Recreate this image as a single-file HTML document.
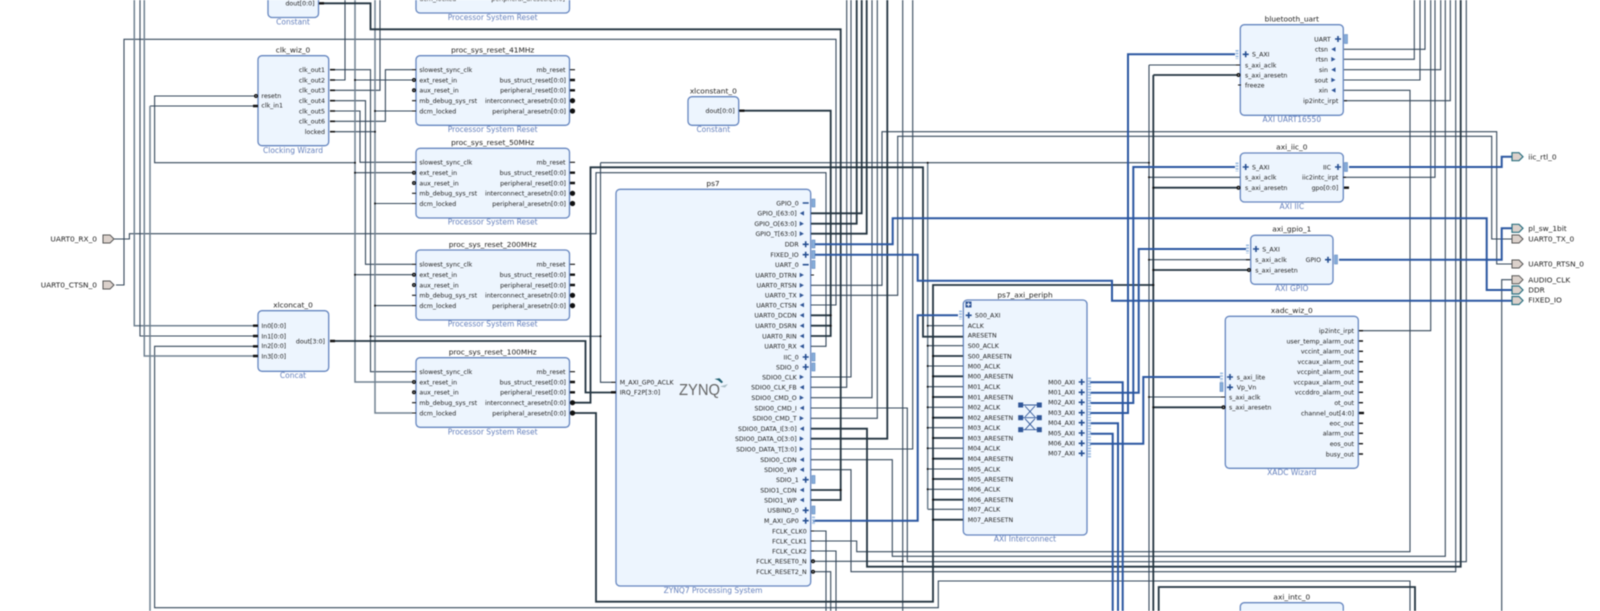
<!DOCTYPE html>
<html><head><meta charset="utf-8"><title>Block Design</title>
<style>
html,body{margin:0;padding:0;background:#fff;width:1600px;height:611px;overflow:hidden}
svg{display:block;filter:blur(.4px)}
text{font-family:"DejaVu Sans",sans-serif;font-size:6.25px;fill:#222}
.t{font-size:7.4px;text-anchor:middle;fill:#1c1c1c}
.b{font-size:7.5px;text-anchor:middle;fill:#6480bd}
.e{text-anchor:end}
.x{font-size:7.4px;fill:#222}
.box{fill:#edf5fe;stroke:#6485bf;stroke-width:1.3}
.w,.g,.k,.h,.u,.p,.s,.m{fill:none}
.w{stroke:#34475a;stroke-width:1.1}
.g{stroke:#6f8090;stroke-width:1.5}
.k{stroke:#22333f;stroke-width:1.8}
.u{stroke:#2a56a0;stroke-width:2}
.p{stroke:#264f92;stroke-width:1.6}
.s{stroke:#111;stroke-width:1.1}
.m{stroke:#111;stroke-width:2.4}
</style></head><body>
<svg xmlns="http://www.w3.org/2000/svg" width="1600" height="611" viewBox="0 0 1600 611">
<rect width="1600" height="611" fill="#fff"/>

<!-- blocks -->
<rect class="box" x="268" y="-10" width="50.5" height="27.5" rx="4"/>
<rect class="box" x="416" y="-30" width="153.5" height="43" rx="4"/>
<rect class="box" x="258" y="55.7" width="70.7" height="90" rx="4"/>
<rect class="box" x="416" y="55.7" width="153.5" height="69.6" rx="4"/>
<rect class="box" x="416" y="148.3" width="153.5" height="69.7" rx="4"/>
<rect class="box" x="416" y="250" width="153.5" height="70" rx="4"/>
<rect class="box" x="416" y="357.7" width="153.5" height="69.6" rx="4"/>
<rect class="box" x="258" y="310.7" width="70.7" height="60.6" rx="4"/>
<rect class="box" x="688" y="96.7" width="50.7" height="28.6" rx="4"/>
<rect class="box" x="616" y="189.3" width="194.7" height="396.7" rx="4"/>
<rect class="box" x="963.3" y="300" width="123.7" height="235" rx="4"/>
<rect class="box" x="1240.3" y="24.7" width="103" height="90.6" rx="4"/>
<rect class="box" x="1240.3" y="153" width="103" height="49" rx="4"/>
<rect class="box" x="1250.7" y="235.3" width="82.3" height="49" rx="4"/>
<rect class="box" x="1225.3" y="316.3" width="133" height="152" rx="4"/>
<rect class="box" x="1240.3" y="602.7" width="103" height="30" rx="4"/>

<!-- wires: thin -->
<path class="w" d="M116 285H124V39.3H836V305H811"/>
<path class="w" d="M114 239H129.4V233.7H596V172.7H826V346.3H811"/>
<path class="w" d="M258 96H154.6V162.7H355"/>
<path class="w" d="M258 106H150"/>
<path class="w" d="M332 80H345V0"/>
<path class="w" d="M332 90.3H380V0"/>
<path class="w" d="M332 100.7H365.5V264.3H412"/>
<path class="w" d="M332 111H360V162.3H412"/>
<path class="w" d="M332 121.3H385.4V69.7H412"/>
<path class="w" d="M332 131.7H375M375 111H412M375 203.5H412M375 305.6H412"/>
<path class="w" d="M332 69.7H370.5V371.7H412M370.5 336.3H600.5M600.5 162.7V382.3H612M600.5 162.7H1149"/>
<path class="w" d="M355 80H412M355 172.7H412M355 274.7H412"/>
<path class="w" d="M258 346.3H154.6V607.7H938.3V581H1410V611"/>
<path class="w" d="M811 285.3H882V131.7H1496.7V264H1512"/>
<path class="w" d="M811 295.3H897.7V136.3H1491.7V239H1512"/>
<path class="w" d="M811 377H851V0"/>
<path class="w" d="M811 387.3H846.7V0"/>
<path class="w" d="M811 397.7H872V0"/>
<path class="w" d="M811 408H907.3V561.7H1466.3V0"/>
<path class="w" d="M811 418.3H877.3V0"/>
<path class="w" d="M811 449H912.7V0"/>
<path class="w" d="M811 459.7H892.3V556.3H1445.3V0"/>
<path class="w" d="M811 469.7H851V571.7H1455.7V0"/>
<path class="w" d="M811 561.3H902.7M902.7 0V611"/>
<path class="w" d="M811 571.7H830.7V611"/>
<path class="w" d="M811 531H826V611"/>
<path class="w" d="M811 541H856.7V551.7H1410V90.3H1344"/>
<path class="w" d="M811 551H836V611"/>
<path class="w" d="M1344 49.3H1425V0M1344 59.3H1414.3V0M1344 69.7H1440.7V0M1344 80H1420V0M1344 100.7H1450.3V0"/>
<path class="w" d="M1344 177.3H1435V0M1359 330.7H1430.7V0"/>
<path class="w" d="M1512 279.7H1501.7V611"/>
<path class="w" d="M1149 65V611M1149 65H1240M1149 177.3H1240M1149 259.7H1250M1149 397H1225"/>
<path class="w" d="M927.7 325.7H963M927.7 345.7H963M927.7 366H963M927.7 386.7H963M927.7 407.3H963M927.7 427.7H963M927.7 448.3H963M927.7 469H963M927.7 489.3H963M927.7 509.3H963"/>

<!-- wires: gray medium -->
<path class="g" d="M134.3 0V325.7H258"/>
<path class="w" d="M140 0V336H258"/>
<path class="g" d="M144.3 0V356H258"/>
<path class="g" d="M150 106V611"/>
<path class="g" d="M355 0V382H412"/>
<path class="g" d="M375 0V413H412"/>
<path class="g" d="M927.7 162.7V509.3"/>

<!-- wires: thick dark -->
<path class="k" d="M322 3.3H370.5V29.3H840.7V500H811M811 490H840.7"/>
<path class="k" d="M332 341H585.5V392.5H612"/>
<path class="k" d="M570 402.7H590.5V167.3H923V336.7H963"/>
<path class="k" d="M570 413H596V601.7H933V285H1153.3"/>
<path class="k" d="M739 110.7H830.7V336H811M811 315.3H830.7M811 325.7H830.7"/>
<path class="k" d="M811 213.3H861.7V0M811 223.7H856.7V0M811 233.7H866.7V0"/>
<path class="k" d="M811 428.7H867V566.7H1460.7V0"/>
<path class="k" d="M811 438.7H887.3V0"/>
<path class="k" d="M1153.3 75V611M1153.3 75H1238M1153.3 187.7H1238M1153.3 270H1248M1153.3 407.3H1223"/>
<path class="k" d="M933 356H963M933 376.3H963M933 397H963M933 417.7H963M933 438H963M933 458.7H963M933 479H963M933 499.7H963M933 519.7H963"/>
<path class="k" d="M1158.7 611V587H1415V611"/>

<!-- wires: blue interface -->
<path class="u" d="M813 244.3H892.7V218.3H1486.7V290H1512"/>
<path class="u" d="M813 254.7H917.7V280.7H1112V300.7H1512"/>
<path class="u" d="M813 520.7H917.7V315.3H958"/>
<path class="u" d="M1090 382.3H1122.7V611"/>
<path class="u" d="M1090 392.7H1138.7V249H1246"/>
<path class="u" d="M1090 403H1133.3V167H1235"/>
<path class="u" d="M1090 413H1128V54.3H1235"/>
<path class="u" d="M1090 423.3H1118V611"/>
<path class="u" d="M1090 433.7H1112.7V611"/>
<path class="u" d="M1090 443.7H1143.3V377H1220"/>
<path class="u" d="M1349 167H1501.7V156.7H1512"/>
<path class="u" d="M1339 259.7H1501.7V228.3H1512"/>

<!-- junction dots -->
<g fill="#111">
<circle cx="355" cy="80" r="1"/><circle cx="355" cy="162.7" r="1"/><circle cx="355" cy="172.7" r="1"/><circle cx="355" cy="274.7" r="1"/>
<circle cx="375" cy="111" r="1"/><circle cx="375" cy="131.7" r="1"/><circle cx="375" cy="203.5" r="1"/><circle cx="375" cy="305.6" r="1"/>
<circle cx="370.5" cy="336.3" r="1"/><circle cx="600.5" cy="336.3" r="1"/><circle cx="927.7" cy="162.7" r="1"/>
<circle cx="830.7" cy="315.3" r="1.1"/><circle cx="830.7" cy="325.7" r="1.1"/><circle cx="840.7" cy="490" r="1.1"/><circle cx="902.7" cy="561.3" r="1"/>
<circle cx="1149" cy="162.7" r="1"/><circle cx="1149" cy="177.3" r="1"/><circle cx="1149" cy="259.7" r="1"/><circle cx="1149" cy="397" r="1"/>
<circle cx="1153.3" cy="187.7" r="1.1"/><circle cx="1153.3" cy="270" r="1.1"/><circle cx="1153.3" cy="285" r="1.1"/><circle cx="1153.3" cy="407.3" r="1.1"/>
<circle cx="927.7" cy="325.7" r="1"/><circle cx="927.7" cy="345.7" r="1"/><circle cx="927.7" cy="366" r="1"/><circle cx="927.7" cy="386.7" r="1"/><circle cx="927.7" cy="407.3" r="1"/><circle cx="927.7" cy="427.7" r="1"/><circle cx="927.7" cy="448.3" r="1"/><circle cx="927.7" cy="469" r="1"/><circle cx="927.7" cy="489.3" r="1"/>
<circle cx="933" cy="356" r="1.1"/><circle cx="933" cy="376.3" r="1.1"/><circle cx="933" cy="397" r="1.1"/><circle cx="933" cy="417.7" r="1.1"/><circle cx="933" cy="438" r="1.1"/><circle cx="933" cy="458.7" r="1.1"/><circle cx="933" cy="479" r="1.1"/><circle cx="933" cy="499.7" r="1.1"/><circle cx="933" cy="519.7" r="1.1"/>
</g>

<!-- port stubs -->
<path class="s" d="M412 69.7h4M412 80h4M412 90.3h4M412 100.7h4M412 111h4M412 162.3h4M412 172.7h4M412 183h4M412 193.3h4M412 203.5h4M412 264.3h4M412 274.7h4M412 285h4M412 295.3h4M412 305.6h4M412 371.7h4M412 382h4M412 392.3h4M412 402.7h4M412 413h4"/>
<path class="s" d="M570 69.7h5M570 162.3h5M570 264.3h5M570 371.7h5"/>
<path class="m" d="M570 80h5M570 90.3h5M570 172.7h5M570 183h5M570 274.7h5M570 285h5M570 382h5M570 392.3h5M570 100.7h5M570 111h5M570 193.3h5M570 203.5h5M570 295.3h5M570 305.6h5M570 402.7h5M570 413h5"/>
<path class="m" d="M330 69.7h5M330 80h5M330 90.3h5M330 100.7h5M330 111h5M330 121.3h5M330 131.7h5" style="stroke-width:1.6"/>
<path class="m" d="M253 106h5M253 325.7h5M253 336h5M253 346.3h5M253 356h5M330 341h5M319 3.3h5M739.5 110.7h5"/>
<path class="s" d="M611.5 382.3h4M811 275h3M811 531h3M811 541h3M811 551h3M1238 85h3M1344 100.7h3M1343 177.3h3"/>
<path class="m" d="M611 392.3h5M1344 187.7h5"/>
<path class="s" d="M1236 65h4M1246 259.7h4M1221 397h4"/>
<path class="m" d="M1359 341h4M1359 351.3h4M1359 361.7h4M1359 371.7h4M1359 382h4M1359 392.3h4M1359 402.7h4M1359 413h4M1359 423.3h4M1359 433.3h4M1359 443.7h4M1359 454h4M1359 330.7h4" style="stroke-width:1.4"/>
<path class="m" d="M1359 413h5"/>
<g fill="#111">
<circle cx="572.5" cy="100.7" r="2.6"/><circle cx="572.5" cy="111" r="2.6"/><circle cx="572.5" cy="193.3" r="2.6"/><circle cx="572.5" cy="203.5" r="2.6"/><circle cx="572.5" cy="295.3" r="2.6"/><circle cx="572.5" cy="305.6" r="2.6"/><circle cx="572.5" cy="402.7" r="2.6"/><circle cx="572.5" cy="413" r="2.6"/>
</g>
<g fill="#ddd" stroke="#111" stroke-width="1.4">
<circle cx="414" cy="80" r="1.3"/><circle cx="414" cy="90.3" r="1.3"/><circle cx="414" cy="172.7" r="1.3"/><circle cx="414" cy="183" r="1.3"/><circle cx="414" cy="274.7" r="1.3"/><circle cx="414" cy="285" r="1.3"/><circle cx="414" cy="382" r="1.3"/><circle cx="414" cy="392.3" r="1.3"/>
<circle cx="256" cy="96" r="1.3"/><circle cx="813" cy="561.3" r="1.3"/><circle cx="813" cy="571.7" r="1.3"/>
<circle cx="1238.5" cy="75" r="1.3"/><circle cx="1238.5" cy="187.7" r="1.3"/><circle cx="1249" cy="270" r="1.3"/><circle cx="1223.5" cy="407.3" r="1.3"/>
</g>

<!-- bus connector bars -->
<g fill="#88aedb" stroke="#4a78b5" stroke-width=".5">
<rect x="812" y="199" width="3" height="8"/><rect x="812" y="240" width="3" height="8"/><rect x="812" y="250.5" width="3" height="8"/><rect x="812" y="260.5" width="3" height="8"/><rect x="812" y="353" width="3" height="8"/><rect x="812" y="363" width="3" height="8"/><rect x="812" y="475.5" width="3" height="8"/><rect x="812" y="506" width="3" height="8"/>
<rect x="1344.5" y="34.5" width="3" height="9"/><rect x="1344.5" y="162.5" width="3" height="9"/><rect x="1334.5" y="255" width="3" height="9"/><rect x="1220" y="382.5" width="3" height="9"/>
</g>
<path fill="none" stroke="#9dbde2" stroke-width="3" stroke-dasharray="1.6 1.2" d="M813.5 516.5v8.5M960.5 310.5v9M1237 50v9M1237 162.5v9M1247.5 244.5v9M1221.5 372.5v9M1089.5 377.5v80"/>

<!-- plus/minus -->
<path class="p" d="M802.7 203h6M802.7 264.7h6"/>
<path class="p" d="M802.7 244.3h6m-3-3v6M802.7 254.7h6m-3-3v6M802.7 357h6m-3-3v6M802.7 367h6m-3-3v6M802.7 479.7h6m-3-3v6M802.7 510.3h6m-3-3v6M802.7 520.7h6m-3-3v6"/>
<path class="p" d="M965.7 315.3h6m-3-3v6M1078.7 382h6m-3-3v6M1078.7 392.3h6m-3-3v6M1078.7 402.3h6m-3-3v6M1078.7 412.7h6m-3-3v6M1078.7 422.7h6m-3-3v6M1078.7 433h6m-3-3v6M1078.7 443.3h6m-3-3v6M1078.7 453.3h6m-3-3v6"/>
<path class="p" d="M1242.7 54.3h6m-3-3v6M1335 39h6m-3-3v6M1242.7 167h6m-3-3v6M1335 167h6m-3-3v6M1253 249h6m-3-3v6M1325 259.7h6m-3-3v6M1227 377h6m-3-3v6M1227 387.3h6m-3-3v6"/>

<!-- arrows -->
<path fill="#2f5597" d="M804 211l-4.200 2.300 4.200 2.300zM799.700 221.400l4.200 2.300-4.200 2.300zM799.700 231.400l4.200 2.300-4.200 2.300zM799.700 272.700l4.200 2.300-4.200 2.300zM799.700 283l4.200 2.300-4.200 2.300zM799.700 293l4.200 2.300-4.200 2.300zM804 302.700l-4.200 2.300 4.200 2.300zM804 313l-4.200 2.300 4.200 2.300zM804 323.400l-4.200 2.300 4.200 2.300zM804 333.700l-4.200 2.300 4.200 2.300zM804 344l-4.200 2.300 4.200 2.300zM799.700 374.700l4.200 2.300-4.200 2.300zM804 385l-4.200 2.300 4.200 2.300zM799.700 395.400l4.200 2.300-4.200 2.300zM804 405.700l-4.200 2.300 4.200 2.300zM799.700 416l4.200 2.300-4.200 2.300zM804 426.400l-4.200 2.300 4.200 2.300zM799.700 436.400l4.200 2.300-4.200 2.300zM799.700 446.700l4.200 2.300-4.200 2.300zM804 457.400l-4.200 2.300 4.200 2.300zM804 467.400l-4.200 2.300 4.200 2.300zM804 487.700l-4.200 2.300 4.200 2.300zM804 497.700l-4.200 2.300 4.200 2.300z"/>
<path fill="#2f5597" d="M1335.500 47l-4.200 2.300 4.200 2.300zM1331.300 57l4.200 2.300-4.200 2.300zM1335.500 67.400l-4.200 2.300 4.200 2.300zM1331.300 77.700l4.200 2.300-4.200 2.300zM1335.500 88l-4.200 2.300 4.200 2.300z"/>

<!-- crossbar -->
<g fill="#2f5597">
<rect x="1018.200" y="402.500" width="5" height="5"/><rect x="1036.800" y="402.500" width="5" height="5"/><rect x="1018.200" y="415.200" width="5" height="5"/><rect x="1036.800" y="415.200" width="5" height="5"/><rect x="1018.200" y="427.200" width="5" height="5"/><rect x="1036.800" y="427.200" width="5" height="5"/>
</g>
<path fill="none" stroke="#2f5597" stroke-width=".9" d="M1023 405h14M1023 417.700h14M1023 429.700h14M1025 406l10 11M1035 406l-10 11M1025 418.700l10 11M1035 418.700l-10 11"/>

<!-- zynq logo -->
<text x="679" y="395" textLength="41" lengthAdjust="spacingAndGlyphs" style="font-family:'Liberation Sans',sans-serif;font-size:16px;fill:#666">ZYNQ</text>
<path fill="#1f5f70" d="M714.500 379l5-.8 3.500 3.800 -1.500 1.300-3.500-3z"/>
<path fill="#a9bcc4" d="M720 386.500l8-2.500-3 3.500z"/>

<!-- external pins -->
<g fill="#dbd1cb" stroke="#555" stroke-width="1">
<path d="M103 235h7l4 4-4 4h-7z"/><path d="M103 281h7l4 4-4 4h-7z"/>
<path d="M1512 235h7l4 4-4 4h-7z"/><path d="M1512 260h7l4 4-4 4h-7z"/><path d="M1512 275.700h7l4 4-4 4h-7z"/>
</g>
<g fill="#dbd1cb" stroke="#2a6f80" stroke-width="1.200">
<path d="M1512 152.700h7l4 4-4 4h-7z"/><path d="M1512 224.300h7l4 4-4 4h-7z"/><path d="M1512 286h7l4 4-4 4h-7z"/><path d="M1512 296.500h7l4 4-4 4h-7z"/>
</g>
<g class="pins">
<text class="x e" x="97" y="241.700">UART0_RX_0</text>
<text class="x e" x="97" y="287.500">UART0_CTSN_0</text>
<text class="x" x="1528.300" y="159.300">iic_rtl_0</text>
<text class="x" x="1528.300" y="231">pl_sw_1bit</text>
<text class="x" x="1528.300" y="241.600">UART0_TX_0</text>
<text class="x" x="1528.300" y="266.700">UART0_RTSN_0</text>
<text class="x" x="1528.300" y="282.400">AUDIO_CLK</text>
<text class="x" x="1528.300" y="292.700">DDR</text>
<text class="x" x="1528.300" y="302.700">FIXED_IO</text>
</g>

<!-- constant top -->
<text class="e" x="314.600" y="5.600">dout[0:0]</text>
<text class="b" x="293" y="24.700">Constant</text>
<text class="e" x="565" y="1">peripheral_aresetn[0:0]</text>
<text x="419.400" y="1">dcm_locked</text>
<text class="b" x="492.700" y="20">Processor System Reset</text>

<!-- clk_wiz -->
<text class="t" x="293" y="52.300">clk_wiz_0</text>
<text class="e" x="325" y="72">clk_out1</text><text class="e" x="325" y="82.300">clk_out2</text><text class="e" x="325" y="92.600">clk_out3</text><text class="e" x="325" y="103">clk_out4</text><text class="e" x="325" y="113.300">clk_out5</text><text class="e" x="325" y="123.600">clk_out6</text><text class="e" x="325" y="134">locked</text>
<text x="261.400" y="98">resetn</text><text x="261.400" y="107.600">clk_in1</text>
<text class="b" x="293" y="153">Clocking Wizard</text>

<!-- proc 41 -->
<text class="t" x="492.700" y="52.300">proc_sys_reset_41MHz</text>
<text x="419.400" y="72">slowest_sync_clk</text><text x="419.400" y="82.300">ext_reset_in</text><text x="419.400" y="92.600">aux_reset_in</text><text x="419.400" y="103">mb_debug_sys_rst</text><text x="419.400" y="113.300">dcm_locked</text>
<text class="e" x="565.500" y="72">mb_reset</text><text class="e" x="566" y="82.300">bus_struct_reset[0:0]</text><text class="e" x="566" y="92.600">peripheral_reset[0:0]</text><text class="e" x="566" y="103">interconnect_aresetn[0:0]</text><text class="e" x="566" y="113.300">peripheral_aresetn[0:0]</text>
<text class="b" x="492.700" y="132">Processor System Reset</text>

<!-- proc 50 -->
<text class="t" x="492.700" y="145">proc_sys_reset_50MHz</text>
<text x="419.400" y="164.600">slowest_sync_clk</text><text x="419.400" y="175">ext_reset_in</text><text x="419.400" y="185.300">aux_reset_in</text><text x="419.400" y="195.600">mb_debug_sys_rst</text><text x="419.400" y="205.800">dcm_locked</text>
<text class="e" x="565.500" y="164.600">mb_reset</text><text class="e" x="566" y="175">bus_struct_reset[0:0]</text><text class="e" x="566" y="185.300">peripheral_reset[0:0]</text><text class="e" x="566" y="195.600">interconnect_aresetn[0:0]</text><text class="e" x="566" y="205.800">peripheral_aresetn[0:0]</text>
<text class="b" x="492.700" y="224.700">Processor System Reset</text>

<!-- proc 200 -->
<text class="t" x="492.700" y="247">proc_sys_reset_200MHz</text>
<text x="419.400" y="266.600">slowest_sync_clk</text><text x="419.400" y="277">ext_reset_in</text><text x="419.400" y="287.300">aux_reset_in</text><text x="419.400" y="297.600">mb_debug_sys_rst</text><text x="419.400" y="307.900">dcm_locked</text>
<text class="e" x="565.500" y="266.600">mb_reset</text><text class="e" x="566" y="277">bus_struct_reset[0:0]</text><text class="e" x="566" y="287.300">peripheral_reset[0:0]</text><text class="e" x="566" y="297.600">interconnect_aresetn[0:0]</text><text class="e" x="566" y="307.900">peripheral_aresetn[0:0]</text>
<text class="b" x="492.700" y="326.700">Processor System Reset</text>

<!-- proc 100 -->
<text class="t" x="492.700" y="354.400">proc_sys_reset_100MHz</text>
<text x="419.400" y="374">slowest_sync_clk</text><text x="419.400" y="384.300">ext_reset_in</text><text x="419.400" y="394.600">aux_reset_in</text><text x="419.400" y="405">mb_debug_sys_rst</text><text x="419.400" y="415.300">dcm_locked</text>
<text class="e" x="565.500" y="374">mb_reset</text><text class="e" x="566" y="384.300">bus_struct_reset[0:0]</text><text class="e" x="566" y="394.600">peripheral_reset[0:0]</text><text class="e" x="566" y="405">interconnect_aresetn[0:0]</text><text class="e" x="566" y="415.300">peripheral_aresetn[0:0]</text>
<text class="b" x="492.700" y="434.400">Processor System Reset</text>

<!-- concat -->
<text class="t" x="293" y="307.700">xlconcat_0</text>
<text x="261.400" y="328">In0[0:0]</text><text x="261.400" y="338.300">In1[0:0]</text><text x="261.400" y="348">In2[0:0]</text><text x="261.400" y="358.300">In3[0:0]</text>
<text class="e" x="325" y="343.300">dout[3:0]</text>
<text class="b" x="293" y="378">Concat</text>

<!-- xlconstant -->
<text class="t" x="713.300" y="93.400">xlconstant_0</text>
<text class="e" x="734.700" y="113">dout[0:0]</text>
<text class="b" x="713.300" y="132">Constant</text>

<!-- ps7 -->
<text class="t" x="713" y="186">ps7</text>
<text x="619.700" y="384.600">M_AXI_GP0_ACLK</text><text x="619.700" y="394.600">IRQ_F2P[3:0]</text>
<g>
<text class="e" x="798.700" y="205.300">GPIO_0</text>
<text class="e" x="796.700" y="215.600">GPIO_I[63:0]</text>
<text class="e" x="796.700" y="226">GPIO_O[63:0]</text>
<text class="e" x="796.700" y="236">GPIO_T[63:0]</text>
<text class="e" x="798.700" y="246.600">DDR</text>
<text class="e" x="798.700" y="257">FIXED_IO</text>
<text class="e" x="798.700" y="267">UART_0</text>
<text class="e" x="796.700" y="277.300">UART0_DTRN</text>
<text class="e" x="796.700" y="287.600">UART0_RTSN</text>
<text class="e" x="796.700" y="297.600">UART0_TX</text>
<text class="e" x="796.700" y="307.300">UART0_CTSN</text>
<text class="e" x="796.700" y="317.600">UART0_DCDN</text>
<text class="e" x="796.700" y="328">UART0_DSRN</text>
<text class="e" x="796.700" y="338.300">UART0_RIN</text>
<text class="e" x="796.700" y="348.600">UART0_RX</text>
<text class="e" x="798.700" y="359.300">IIC_0</text>
<text class="e" x="798.700" y="369.300">SDIO_0</text>
<text class="e" x="796.700" y="379.300">SDIO0_CLK</text>
<text class="e" x="796.700" y="389.600">SDIO0_CLK_FB</text>
<text class="e" x="796.700" y="400">SDIO0_CMD_O</text>
<text class="e" x="796.700" y="410.300">SDIO0_CMD_I</text>
<text class="e" x="796.700" y="420.600">SDIO0_CMD_T</text>
<text class="e" x="796.700" y="431">SDIO0_DATA_I[3:0]</text>
<text class="e" x="796.700" y="441">SDIO0_DATA_O[3:0]</text>
<text class="e" x="796.700" y="451.300">SDIO0_DATA_T[3:0]</text>
<text class="e" x="796.700" y="462">SDIO0_CDN</text>
<text class="e" x="796.700" y="472">SDIO0_WP</text>
<text class="e" x="798.700" y="482">SDIO_1</text>
<text class="e" x="796.700" y="492.300">SDIO1_CDN</text>
<text class="e" x="796.700" y="502.300">SDIO1_WP</text>
<text class="e" x="798.700" y="512.600">USBIND_0</text>
<text class="e" x="798.700" y="523">M_AXI_GP0</text>
<text class="e" x="806.700" y="533.300">FCLK_CLK0</text>
<text class="e" x="806.700" y="543.300">FCLK_CLK1</text>
<text class="e" x="806.700" y="553.300">FCLK_CLK2</text>
<text class="e" x="806.700" y="563.600">FCLK_RESET0_N</text>
<text class="e" x="806.700" y="574">FCLK_RESET2_N</text>
</g>
<text class="b" x="713" y="593">ZYNQ7 Processing System</text>

<!-- interconnect -->
<text class="t" x="1025" y="297.300">ps7_axi_periph</text>
<rect x="965.500" y="301.500" width="6" height="6" fill="#2f5597"/>
<path stroke="#fff" stroke-width="1" d="M966.500 304.500h4m-2-2v4"/>
<text x="975" y="317.600">S00_AXI</text>
<text x="967.700" y="328">ACLK</text><text x="967.700" y="337.600">ARESETN</text><text x="967.700" y="348">S00_ACLK</text><text x="967.700" y="358.300">S00_ARESETN</text><text x="967.700" y="368.300">M00_ACLK</text><text x="967.700" y="378.600">M00_ARESETN</text><text x="967.700" y="389">M01_ACLK</text><text x="967.700" y="399.300">M01_ARESETN</text><text x="967.700" y="409.600">M02_ACLK</text><text x="967.700" y="420">M02_ARESETN</text><text x="967.700" y="430">M03_ACLK</text><text x="967.700" y="440.300">M03_ARESETN</text><text x="967.700" y="450.600">M04_ACLK</text><text x="967.700" y="461">M04_ARESETN</text><text x="967.700" y="471.300">M05_ACLK</text><text x="967.700" y="481.300">M05_ARESETN</text><text x="967.700" y="491.600">M06_ACLK</text><text x="967.700" y="502">M06_ARESETN</text><text x="967.700" y="511.600">M07_ACLK</text><text x="967.700" y="522">M07_ARESETN</text>
<text class="e" x="1075" y="384.300">M00_AXI</text><text class="e" x="1075" y="394.600">M01_AXI</text><text class="e" x="1075" y="404.600">M02_AXI</text><text class="e" x="1075" y="415">M03_AXI</text><text class="e" x="1075" y="425">M04_AXI</text><text class="e" x="1075" y="435.300">M05_AXI</text><text class="e" x="1075" y="445.600">M06_AXI</text><text class="e" x="1075" y="455.600">M07_AXI</text>
<text class="b" x="1025" y="541.700">AXI Interconnect</text>

<!-- bluetooth uart -->
<text class="t" x="1291.800" y="21.400">bluetooth_uart</text>
<text x="1252" y="56.600">S_AXI</text><text x="1245" y="67.300">s_axi_aclk</text><text x="1245" y="77.300">s_axi_aresetn</text><text x="1245" y="87.300">freeze</text>
<text class="e" x="1330.700" y="41.300">UART</text><text class="e" x="1328" y="51.600">ctsn</text><text class="e" x="1328" y="61.600">rtsn</text><text class="e" x="1328" y="72">sin</text><text class="e" x="1328" y="82.300">sout</text><text class="e" x="1328" y="92.600">xin</text><text class="e" x="1338.300" y="103">ip2intc_irpt</text>
<text class="b" x="1291.800" y="122">AXI UART16550</text>

<!-- iic -->
<text class="t" x="1291.800" y="149.400">axi_iic_0</text>
<text x="1252" y="169.300">S_AXI</text><text x="1245" y="179.600">s_axi_aclk</text><text x="1245" y="190">s_axi_aresetn</text>
<text class="e" x="1331" y="169.300">IIC</text><text class="e" x="1338.300" y="179.600">iic2intc_irpt</text><text class="e" x="1338.300" y="190">gpo[0:0]</text>
<text class="b" x="1291.800" y="209">AXI IIC</text>

<!-- gpio -->
<text class="t" x="1291.800" y="231.700">axi_gpio_1</text>
<text x="1262.300" y="251.300">S_AXI</text><text x="1255.300" y="262">s_axi_aclk</text><text x="1255.300" y="272.300">s_axi_aresetn</text>
<text class="e" x="1321" y="262">GPIO</text>
<text class="b" x="1291.800" y="291">AXI GPIO</text>

<!-- xadc -->
<text class="t" x="1291.800" y="313">xadc_wiz_0</text>
<text x="1236.700" y="379.300">s_axi_lite</text><text x="1236.700" y="389.600">Vp_Vn</text><text x="1229" y="399.300">s_axi_aclk</text><text x="1229" y="409.600">s_axi_aresetn</text>
<text class="e" x="1354" y="333">ip2intc_irpt</text><text class="e" x="1354" y="343.300">user_temp_alarm_out</text><text class="e" x="1354" y="353.600">vccint_alarm_out</text><text class="e" x="1354" y="364">vccaux_alarm_out</text><text class="e" x="1354" y="374">vccpint_alarm_out</text><text class="e" x="1354" y="384.300">vccpaux_alarm_out</text><text class="e" x="1354" y="394.600">vccddro_alarm_out</text><text class="e" x="1354" y="405">ot_out</text><text class="e" x="1354" y="415.300">channel_out[4:0]</text><text class="e" x="1354" y="425.600">eoc_out</text><text class="e" x="1354" y="435.600">alarm_out</text><text class="e" x="1354" y="446">eos_out</text><text class="e" x="1354" y="456.300">busy_out</text>
<text class="b" x="1291.800" y="475">XADC Wizard</text>

<!-- intc -->
<text class="t" x="1291.800" y="599.400">axi_intc_0</text>
</svg>
</body></html>
